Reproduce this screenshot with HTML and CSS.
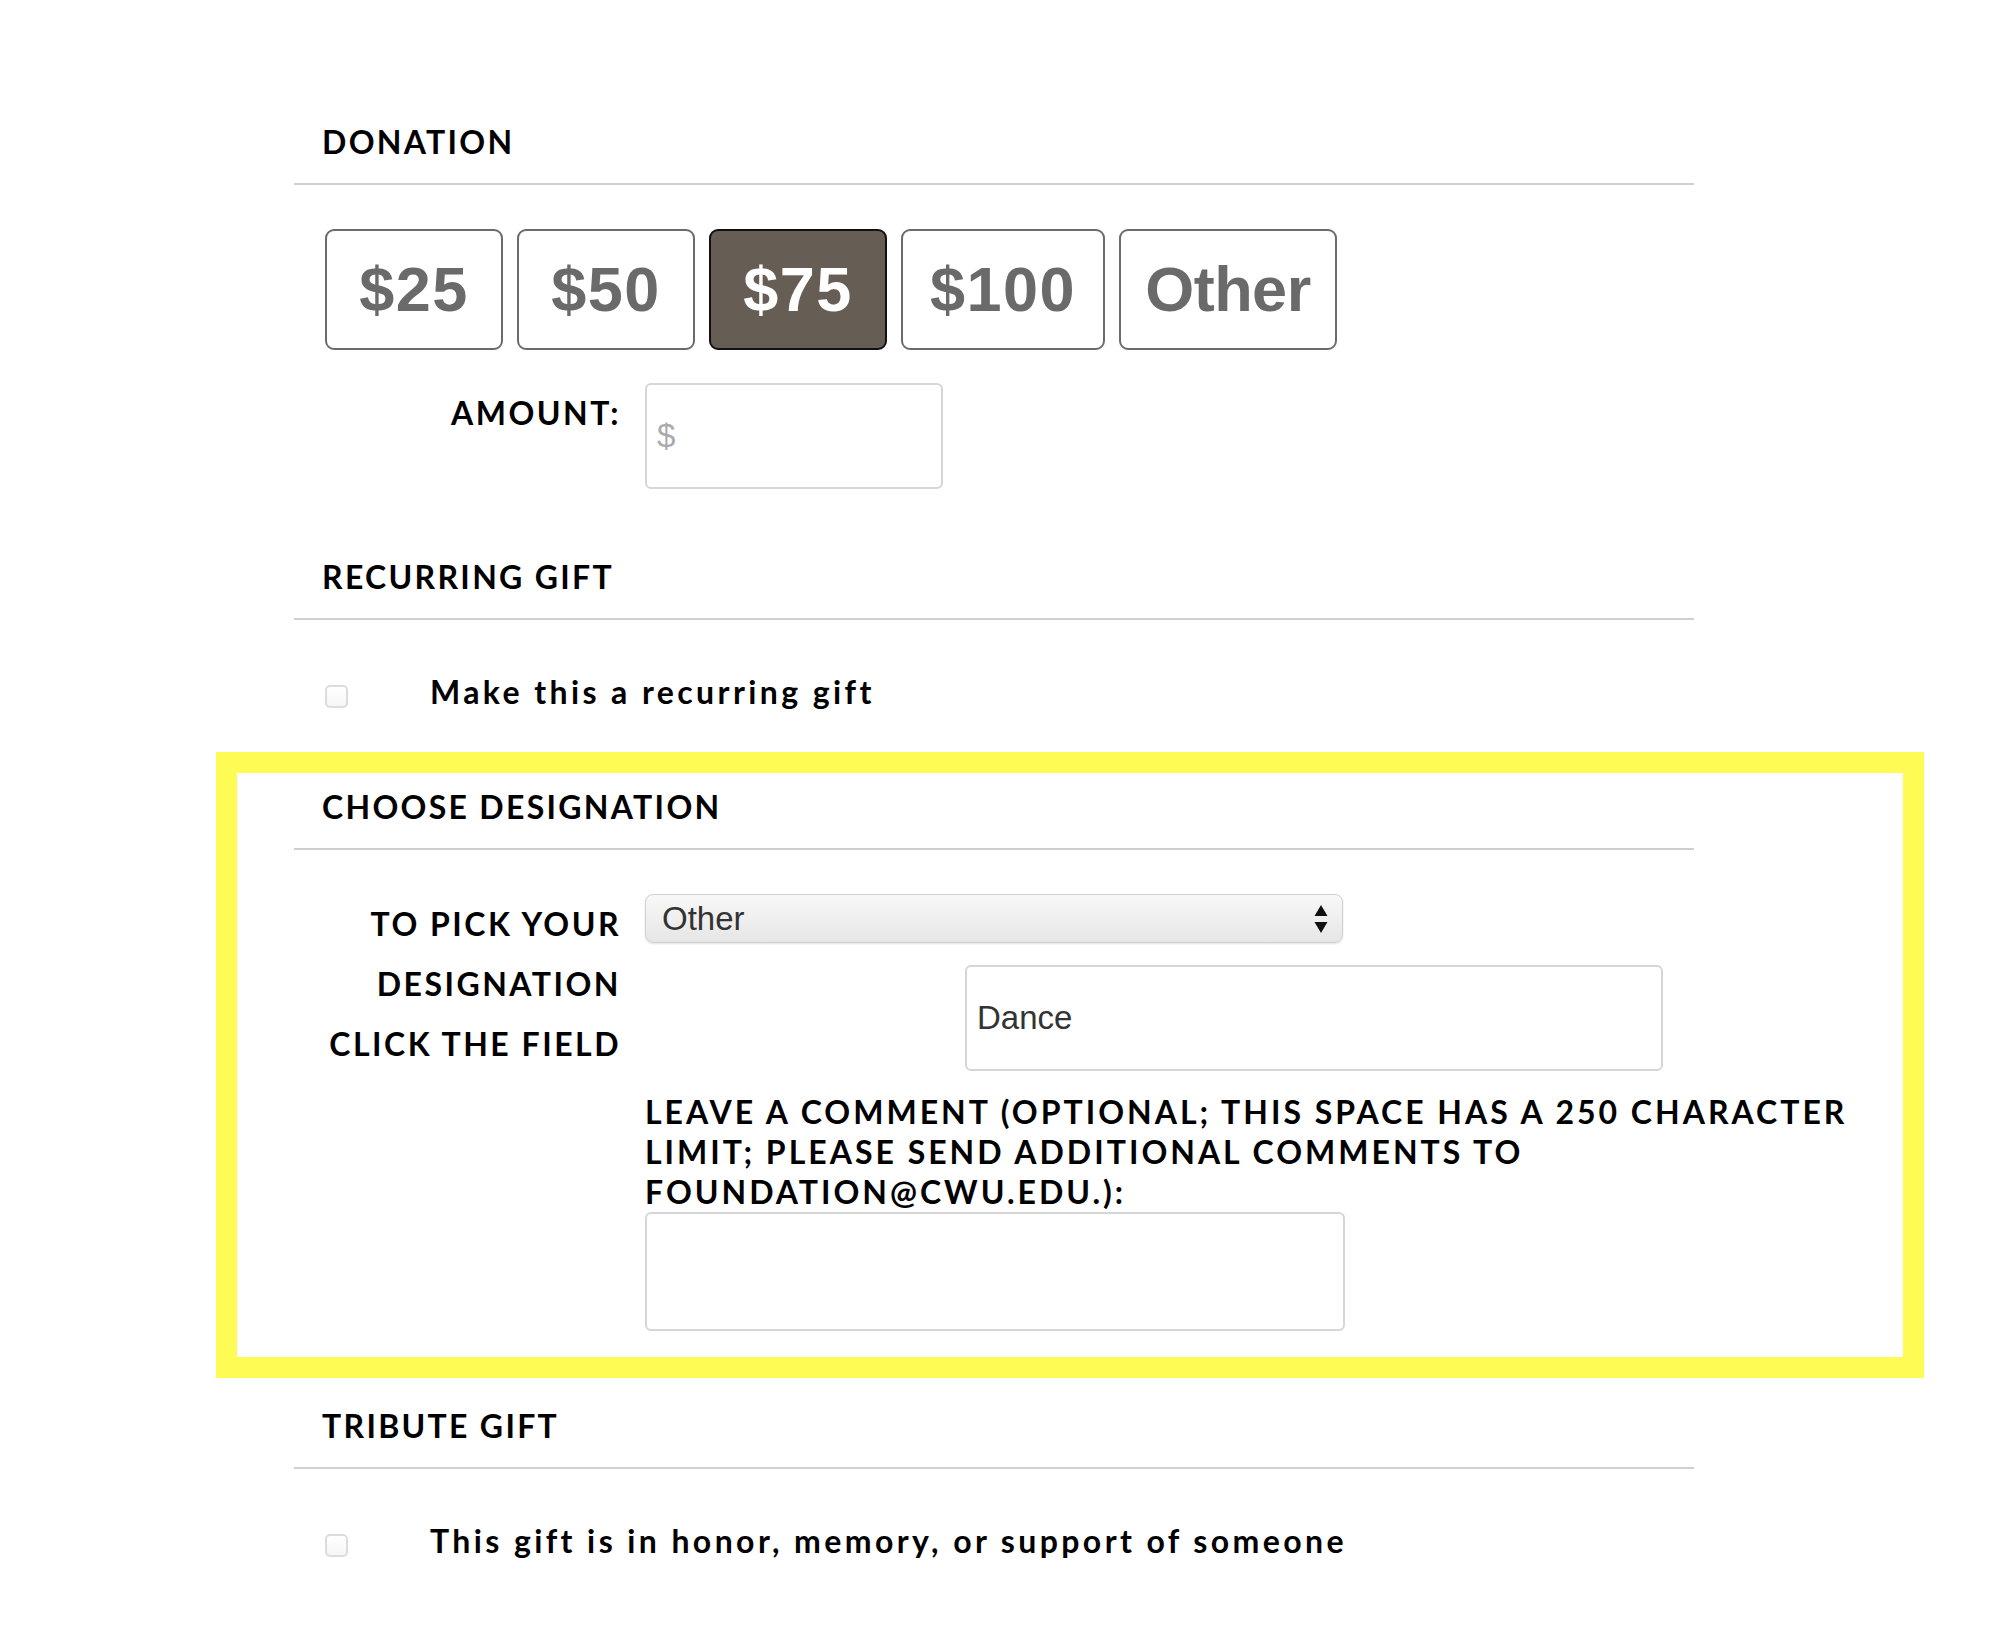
FILE: index.html
```html
<!DOCTYPE html>
<html lang="en">
<head>
<meta charset="utf-8">
<title>Donation</title>
<link rel="stylesheet" href="styles.css">
</head>
<body>
<form class="form">
  <section class="section">
    <h2 class="heading">DONATION</h2>
    <div class="amounts">
      <button type="button" class="amt">$25</button>
      <button type="button" class="amt">$50</button>
      <button type="button" class="amt amt-active">$75</button>
      <button type="button" class="amt">$100</button>
      <button type="button" class="amt amt-other">Other</button>
    </div>
    <div class="row">
      <label class="label" for="amount">AMOUNT:</label>
      <input id="amount" class="text-input amount-input" type="text" placeholder="$">
    </div>
  </section>

  <section class="section section-recurring">
    <h2 class="heading">RECURRING GIFT</h2>
    <label class="check-row">
      <input type="checkbox" class="check">
      <span class="check-text">Make this a recurring gift</span>
    </label>
  </section>

  <section class="highlight">
    <h2 class="heading">CHOOSE DESIGNATION</h2>
    <div class="row row-designation">
      <label class="label" for="designation">TO PICK YOUR DESIGNATION CLICK THE FIELD</label>
      <div class="field-stack">
        <div class="select-wrap">
          <select id="designation" class="select">
            <option>Other</option>
          </select>
          <svg class="select-arrows" width="14" height="28" viewBox="0 0 14 28"><path d="M7 0 L13.5 11 L0.5 11 Z M0.5 17 L13.5 17 L7 28 Z" fill="#111"/></svg>
        </div>
        <input class="text-input other-input" type="text" value="Dance">
      </div>
    </div>
    <div class="row row-comment">
      <div class="comment">
        <label class="comment-label" for="comment">LEAVE A COMMENT (OPTIONAL; THIS SPACE HAS A 250 CHARACTER LIMIT; PLEASE SEND ADDITIONAL COMMENTS TO FOUNDATION@CWU.EDU.):</label>
        <textarea id="comment" class="textarea"></textarea>
      </div>
    </div>
  </section>

  <section class="section section-tribute">
    <h2 class="heading">TRIBUTE GIFT</h2>
    <label class="check-row">
      <input type="checkbox" class="check">
      <span class="check-text">This gift is in honor, memory, or support of someone</span>
    </label>
  </section>
</form>
</body>
</html>
```
FILE: styles.css
```css
* { box-sizing: border-box; }

html, body {
  margin: 0;
  padding: 0;
  background: #fff;
}

body {
  font-family: "Lato", "Liberation Sans", sans-serif;
  color: #000;
}

.form {
  width: 1400px;
  margin-left: 294px;
  padding-top: 122px;
}

.heading {
  margin: 0;
  padding: 0 0 21px 28px;
  font-size: 32px;
  line-height: 40px;
  font-weight: 700;
  letter-spacing: 2.3px;
  border-bottom: 2px solid #cfcfcf;
  width: 1400px;
}

.amounts {
  display: flex;
  gap: 14px;
  margin: 44px 0 0 31px;
}

.amt {
  min-width: 178px;
  height: 121px;
  padding: 0 27px;
  border: 2px solid #6b6b6b;
  border-radius: 9px;
  background: #fff;
  color: #6a6a6a;
  font-family: "Liberation Sans", Arial, sans-serif;
  font-weight: 700;
  font-size: 63px;
  line-height: 117px;
  letter-spacing: 1.5px;
}

.amt-other {
  letter-spacing: -0.5px;
  padding: 0 24px;
}

.amt-active {
  background: #665e55;
  border-color: #111;
  color: #fff;
}

.row {
  display: grid;
  grid-template-columns: 327px 1fr;
  column-gap: 24px;
  margin-top: 33px;
}

.label {
  text-align: right;
  font-size: 32px;
  line-height: 60px;
  font-weight: 700;
  letter-spacing: 2.5px;
}

.text-input {
  font-family: "Liberation Sans", Arial, sans-serif;
  font-size: 33px;
  color: #333;
  border: 2px solid #d6d6d6;
  border-radius: 6px;
  background: #fff;
  padding: 0 10px;
  outline: none;
}

.text-input::placeholder {
  color: #aaa;
}

.amount-input {
  width: 298px;
  height: 106px;
}

.section-recurring {
  margin-top: 68px;
}

.check-row {
  display: flex;
  align-items: flex-start;
  margin: 52px 0 0 31px;
}

.check {
  appearance: none;
  -webkit-appearance: none;
  width: 23px;
  height: 23px;
  margin: 13px 82px 0 0;
  border: 2px solid #dcdcdc;
  border-radius: 5px;
  background: linear-gradient(#fff, #f6f6f6);
  flex: none;
}

.check-text {
  font-size: 32px;
  line-height: 40px;
  font-weight: 700;
  letter-spacing: 3.4px;
}

.highlight {
  margin: 40px -230px 0 -78px;
  border: 21px solid #fffb55;
  padding: 14px 0 26px 57px;
}

.row-designation {
  margin-top: 44px;
}

.field-stack {
  display: flex;
  flex-direction: column;
  gap: 22px;
}

.select-wrap {
  position: relative;
  width: 698px;
  height: 49px;
}

.select {
  appearance: none;
  -webkit-appearance: none;
  width: 100%;
  height: 100%;
  border: 1px solid #d0d0d0;
  border-radius: 8px;
  background: linear-gradient(#f8f8f8, #e6e6e6);
  box-shadow: 0 1px 2px rgba(0,0,0,0.12);
  font-family: "Liberation Sans", Arial, sans-serif;
  font-size: 33px;
  color: #333;
  padding: 0 0 0 16px;
}

.select-arrows {
  position: absolute;
  right: 15px;
  top: 11px;
}

.other-input {
  width: 698px;
  height: 106px;
  margin-left: 320px;
}

.row-comment {
  margin-top: 18px;
}

.comment {
  grid-column: 2;
}

.comment-label {
  display: block;
  font-size: 32px;
  line-height: 40px;
  font-weight: 700;
  letter-spacing: 3px;
}

.textarea {
  display: block;
  width: 700px;
  height: 119px;
  border: 2px solid #d6d6d6;
  border-radius: 6px;
  resize: none;
  font-family: "Liberation Sans", Arial, sans-serif;
  font-size: 29px;
}

.section-tribute {
  margin-top: 28px;
  padding-bottom: 60px;
}
```
